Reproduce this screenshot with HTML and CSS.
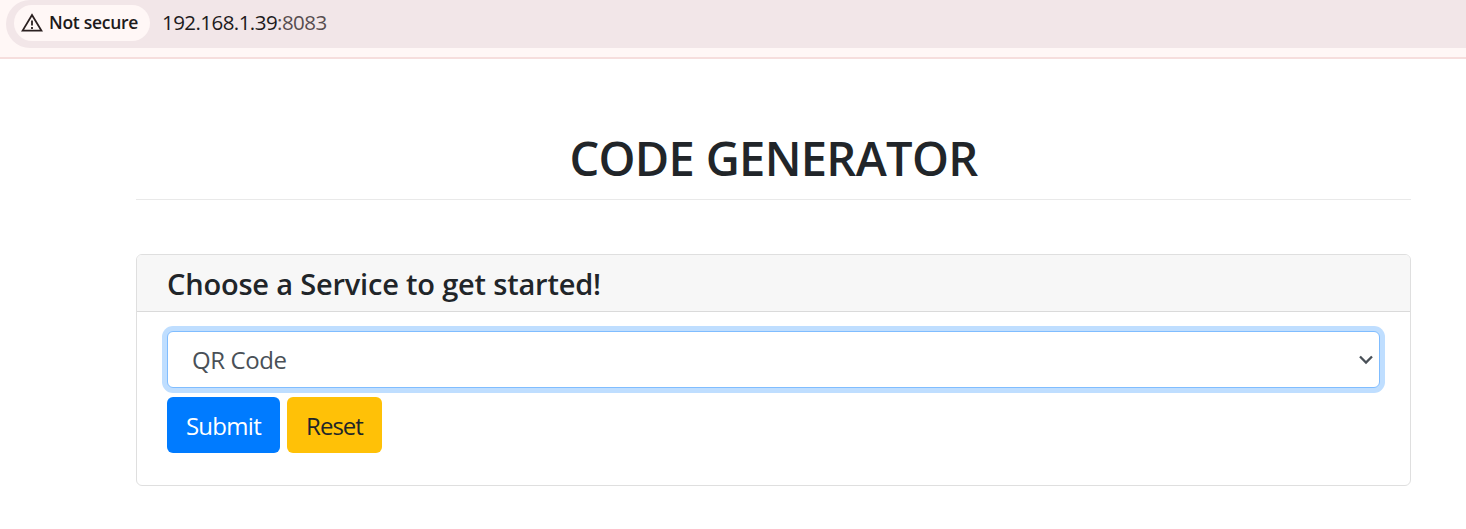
FILE: index.html
```html
<!DOCTYPE html>
<html lang="en">
<head>
<meta charset="utf-8">
<title>Code Generator</title>
<link rel="stylesheet" href="styles.css">
</head>
<body>
<div class="toolbar">
  <div class="omnibox">
    <div class="security-chip">
      <svg class="warning-icon" width="22" height="20" viewBox="0 0 22 20" fill="none" stroke="#2b2020" stroke-width="1.8"><path d="M1.6 17.6 11 2.1l9.4 15.5z"/><path d="M11 7.5v5M11 14v2"/></svg>
      <span class="chip-label">Not secure</span>
    </div>
    <span class="address">192.168.1.39<span class="port">:8083</span></span>
  </div>
</div>
<main class="container">
  <h1 class="title"><span>CODE GENERATOR</span></h1>
  <section class="card">
    <h2 class="card-header"><span>Choose a Service to get started!</span></h2>
    <form class="card-body">
      <div class="select-wrap">
        <select class="form-control"><option>QR Code</option></select>
        <svg class="chevron" width="16" height="12" viewBox="0 0 16 12" fill="none" stroke="#495057" stroke-width="2.3"><path d="m2 2.5 6 6 6-6"/></svg>
      </div>
      <div class="actions">
        <button type="button" class="btn btn-primary">Submit</button>
        <button type="button" class="btn btn-warning">Reset</button>
      </div>
    </form>
  </section>
</main>
</body>
</html>
```
FILE: styles.css
```css
* { box-sizing: border-box; }
body {
  margin: 0;
  background: #fff;
  color: #212529;
  font-family: "Segoe UI", "Open Sans", "Noto Sans", sans-serif;
  overflow: hidden;
}
.toolbar {
  height: 59px;
  padding-left: 6px;
  background: #fff7f6;
  border-bottom: 2px solid #f6dedd;
}
.omnibox {
  display: flex;
  align-items: center;
  height: 48px;
  padding: 0 0 3px 8px;
  background: #f2e6e8;
  border-radius: 24px 0 0 24px;
}
.security-chip {
  display: flex;
  align-items: center;
  width: 136px;
  height: 36px;
  padding-left: 7px;
  border-radius: 18px;
  background: #fff7f6;
}
.warning-icon { flex: none; }
.chip-label {
  margin-left: 6px;
  padding-bottom: 2px;
  font-size: 17.5px;
  font-weight: 560;
  letter-spacing: -0.28px;
  color: #201a1b;
  white-space: nowrap;
}
.address {
  margin-left: 12px;
  padding-bottom: 2px;
  font-size: 20.5px;
  letter-spacing: -0.55px;
  color: #201a1b;
}
.port { color: #574d4f; }
.container {
  width: 1275px;
  margin-left: 136px;
}
.title {
  height: 141px;
  margin: 0 0 54px;
  padding-top: 66px;
  border-bottom: 1px solid #e9e9e9;
  font-size: 47px;
  line-height: 66px;
  font-weight: 570;
  letter-spacing: -0.68px;
  text-align: center;
}
.card {
  height: 232px;
  border: 1px solid #dfdfdf;
  border-radius: 6px;
}
.card-header {
  height: 57px;
  margin: 0;
  padding-left: 30px;
  background: #f7f7f7;
  border-bottom: 1px solid #dadada;
  border-radius: 5px 5px 0 0;
  font-size: 29px;
  line-height: 58px;
  font-weight: 570;
  letter-spacing: -0.19px;
}
.card-body { padding: 19px 30px 0; }
.select-wrap { position: relative; }
.form-control {
  display: block;
  width: 100%;
  height: 57px;
  padding: 0 24px;
  appearance: none;
  border: 1px solid #80bdff;
  border-radius: 6px;
  outline: none;
  box-shadow: 0 0 0 5px #bfdeff;
  background: #fff;
  color: #495057;
  font: 24px "Segoe UI", "Open Sans", "Noto Sans", sans-serif;
  letter-spacing: -0.4px;
}
.chevron {
  position: absolute;
  right: 6px;
  top: 23px;
}
.actions {
  display: flex;
  gap: 7px;
  margin-top: 9px;
}
.btn {
  height: 56px;
  padding: 1px 0 0;
  border: 0;
  border-radius: 6px;
  font: 24px "Segoe UI", "Open Sans", "Noto Sans", sans-serif;
  letter-spacing: -0.7px;
}
.btn-primary { width: 113px; background: #007bff; color: #fff; }
.btn-warning { width: 95px; background: #ffc107; color: #212529; letter-spacing: -1px; }
```
